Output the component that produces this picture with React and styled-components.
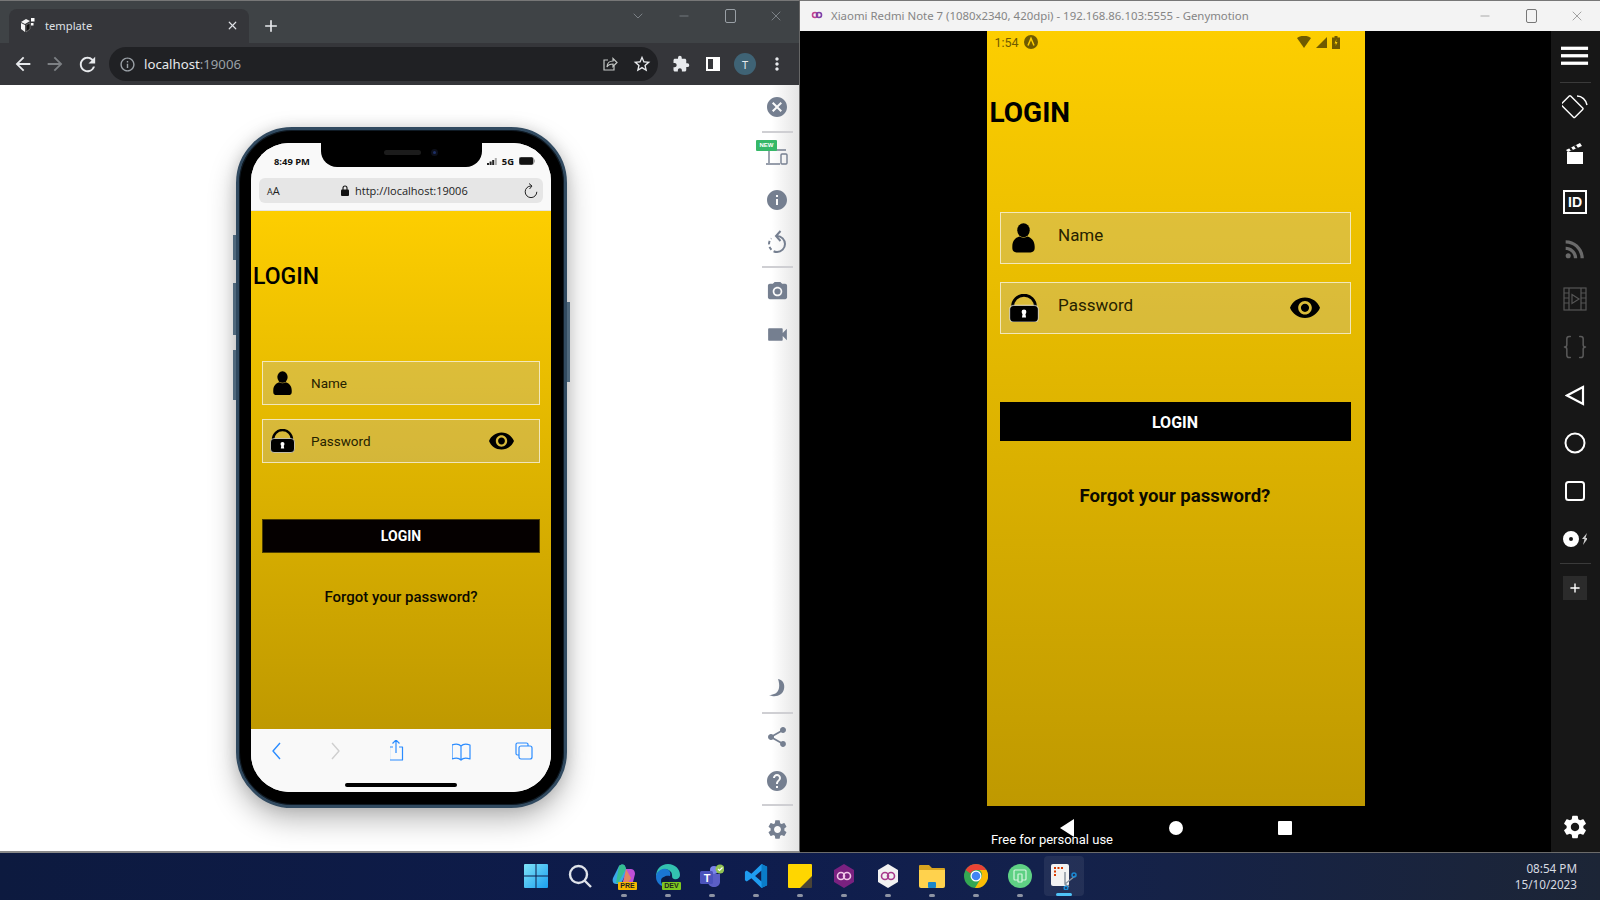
import styled, { createGlobalStyle } from "styled-components";
import {
  MdCancel,
  MdInfo,
  MdCameraAlt,
  MdVideocam,
  MdHelp,
  MdSettings,
  MdShare,
  MdRssFeed,
  MdExtension,
  MdArrowBack,
  MdArrowForward,
  MdRefresh,
  MdInfoOutline,
  MdStarBorder,
  MdMoreVert,
} from "react-icons/md";
import { Braces, Minus, X, ChevronDown, Plus } from "lucide-react";

const GlobalStyle = createGlobalStyle`
  html, body { margin: 0; padding: 0; width: 1600px; height: 900px; overflow: hidden; }
  body { font-family: "Noto Sans", sans-serif; background: #000; }
  * { box-sizing: border-box; }
`;

const Desktop = styled.div`
  width: 1600px;
  height: 900px;
  display: flex;
  flex-direction: column;
`;

const Windows = styled.div`
  display: flex;
  height: 853px;
`;

/* ---------- chrome window ---------- */

const BrowserWindow = styled.div`
  width: 800px;
  display: flex;
  flex-direction: column;
  border-bottom: 2px solid #8a8a8a;
  border-right: 1px solid #666;
  background: #fff;
`;

const TitleBar = styled.div`
  height: 43px;
  background: #3f4346;
  border-top: 1px solid #777;
  display: flex;
  padding-left: 9px;
  padding-top: 8px;
  position: relative;
`;

const Tab = styled.div`
  width: 240px;
  height: 34px;
  background: #35363a;
  border-radius: 8px 8px 0 0;
  display: flex;
  align-items: center;
  padding: 0 10px 1px 11px;
  gap: 9px;
  color: #dfe1e5;
  font-size: 11.2px;
`;

const TabTitle = styled.span`
  flex: 1;
`;

const NewTab = styled.div`
  width: 44px;
  height: 34px;
  display: flex;
  align-items: center;
  justify-content: center;
  color: #e8eaed;
`;

const WindowControls = styled.div`
  position: absolute;
  top: 0;
  right: 0;
  display: flex;
`;

const WindowControl = styled.div`
  width: 46px;
  height: 30px;
  display: flex;
  align-items: center;
  justify-content: center;
  color: ${(p) => p.$color || "#9aa0a6"};
`;

const BrowserToolbar = styled.div`
  height: 42px;
  background: #35363a;
  display: flex;
  align-items: center;
  padding-left: 7px;
`;

const ToolbarBtn = styled.div`
  width: 32px;
  height: 32px;
  display: flex;
  align-items: center;
  justify-content: center;
  color: ${(p) => p.$color || "#e8eaed"};
`;

const Omnibox = styled.div`
  width: 549px;
  height: 34px;
  margin: 0 7px 0 6px;
  border-radius: 17px;
  background: #202124;
  display: flex;
  align-items: center;
  padding-left: 10px;
  font-size: 13.2px;
  color: #9aa0a6;
`;

const Host = styled.span`
  color: #e8eaed;
  margin-left: 8px;
`;

const OmniSpacer = styled.div`
  flex: 1;
`;

const Avatar = styled.div`
  width: 22px;
  height: 22px;
  border-radius: 50%;
  background: #3f6375;
  color: #e8eaed;
  font-size: 11px;
  display: flex;
  align-items: center;
  justify-content: center;
`;

const BrowserBody = styled.div`
  flex: 1;
  display: flex;
  justify-content: space-between;
  min-height: 0;
`;

const PhoneArea = styled.div`
  padding: 42px 0 0 236px;
`;

/* ---------- phone frame ---------- */

const Phone = styled.div`
  width: 331px;
  height: 681px;
  position: relative;
  background: #000;
  border: 3px solid #314a60;
  border-radius: 56px;
  padding: 13px 12px;
  box-shadow: 0 12px 28px rgba(0, 0, 0, 0.28), 0 0 14px rgba(0, 0, 0, 0.12),
    inset 0 0 0 1px #0f1a24;
`;

const SideButton = styled.div`
  position: absolute;
  width: 3px;
  top: ${(p) => p.$top}px;
  height: ${(p) => p.$h}px;
  ${(p) => (p.$right ? "right: -6px;" : "left: -6px;")}
  background: #4f687c;
`;

const Screen = styled.div`
  width: 300px;
  height: 649px;
  position: relative;
  border-radius: 38px;
  overflow: hidden;
  display: flex;
  flex-direction: column;
  background: #f9f9f9;
`;

const Notch = styled.div`
  position: absolute;
  top: 0;
  left: 70px;
  width: 161px;
  height: 24px;
  background: #000;
  border-radius: 0 0 16px 16px;
  display: flex;
  align-items: center;
  justify-content: center;
  gap: 10px;
  padding-bottom: 6px;
`;

const Speaker = styled.div`
  width: 37px;
  height: 5px;
  border-radius: 3px;
  background: #1c1c1c;
`;

const NotchCamera = styled.div`
  width: 7px;
  height: 7px;
  border-radius: 50%;
  background: #1d2f66;
  border: 2px solid #0c0f1a;
  margin-right: -18px;
`;

const SafariHeader = styled.div`
  height: 68px;
  background: #f9f9f9;
  border-bottom: 1px solid #e4e4e4;
  display: flex;
  flex-direction: column;
`;

const IosStatus = styled.div`
  height: 35px;
  display: flex;
  align-items: center;
  justify-content: space-between;
  padding: 1px 16px 0 23px;
  font-family: "Open Sans", sans-serif;
  font-size: 9.4px;
  font-weight: 700;
  color: #111;
`;

const IosRight = styled.div`
  display: flex;
  align-items: center;
  gap: 5px;
`;

const UrlBar = styled.div`
  height: 25px;
  margin: 0 8px;
  border-radius: 6px;
  background: #e6e6e6;
  display: flex;
  align-items: center;
  padding: 0 5px 0 8px;
  font-family: "Open Sans", sans-serif;
  color: #222;
`;

const AaLabel = styled.span`
  font-size: 9px;
  width: 74px;
  & b {
    font-weight: 400;
    font-size: 11px;
  }
`;

const UrlText = styled.span`
  font-size: 11px;
  margin-left: 6px;
  flex: 1;
`;

const SafariBar = styled.div`
  flex: 1;
  display: flex;
  flex-direction: column;
  align-items: center;
  background: #f9f9f9;
`;

const SafariIcons = styled.div`
  width: 100%;
  display: flex;
  justify-content: space-between;
  padding: 11px 17px 0 15px;
`;

const HomeIndicator = styled.div`
  width: 112px;
  height: 4px;
  border-radius: 2px;
  background: #000;
  margin-top: auto;
  margin-bottom: 5px;
`;

/* ---------- login form (both devices) ---------- */

const Page = styled.div`
  background: linear-gradient(180deg, #fdce00 0%, #bf9900 100%);
  display: flex;
  flex-direction: column;
  font-family: Roboto, sans-serif;
  color: #000;
  ${(p) =>
    p.$big
      ? "width: 378px; height: 775px; padding: 0 14px 0 13px;"
      : "height: 518px; padding: 52px 11px 0;"}
`;

const PageTitle = styled.div`
  font-size: ${(p) => (p.$big ? 28 : 23)}px;
  font-weight: ${(p) => (p.$big ? 700 : 500)};
  line-height: ${(p) => (p.$big ? 34 : 28)}px;
  margin: ${(p) => (p.$big ? "43px 0 82px -10px" : "0 0 70px -9px")};
`;

const Field = styled.div`
  height: ${(p) => (p.$big ? 52 : 43.5)}px;
  margin-bottom: ${(p) => (p.$big ? 18 : 14.5)}px;
  display: flex;
  align-items: center;
  border: 1px solid rgba(255, 255, 255, 0.65);
  background: rgba(190, 190, 190, 0.3);
`;

const FieldIcon = styled.div`
  width: ${(p) => (p.$big ? 46 : 38)}px;
  display: flex;
  justify-content: center;
`;

const FieldText = styled.span`
  font-size: ${(p) => (p.$big ? 17 : 13.5)}px;
  color: #262200;
  margin-left: ${(p) => (p.$big ? 11.5 : 10)}px;
  margin-bottom: ${(p) => (p.$big ? 6 : 0)}px;
`;

const EyeSlot = styled.div`
  margin-left: auto;
  margin-right: ${(p) => (p.$big ? 30 : 25)}px;
  display: flex;
`;

const SubmitButton = styled.div`
  height: ${(p) => (p.$big ? 39 : 34)}px;
  margin-top: ${(p) => (p.$big ? 50 : 41.5)}px;
  padding-top: ${(p) => (p.$big ? 1 : 0)}px;
  background: ${(p) => (p.$big ? "#000" : "#050000")};
  border: 1px solid ${(p) => (p.$big ? "#000" : "#4c3d00")};
  color: #fff;
  font-weight: 700;
  font-size: ${(p) => (p.$big ? 16 : 14)}px;
  display: flex;
  align-items: center;
  justify-content: center;
`;

const Forgot = styled.div`
  text-align: center;
  font-weight: ${(p) => (p.$big ? 700 : 500)};
  font-size: ${(p) => (p.$big ? 18.6 : 15)}px;
  line-height: ${(p) => (p.$big ? 22 : 20)}px;
  margin-top: ${(p) => (p.$big ? 44 : 34)}px;
  color: #0c0a00;
`;

/* ---------- side rails ---------- */

const LightRail = styled.div`
  width: 50px;
  display: flex;
  flex-direction: column;
  justify-content: space-between;
  align-items: center;
  padding: 0 0 10px 6px;
  background: linear-gradient(90deg, #fff 0%, #fff 45%, #e4e4e4 100%);
`;

const RailGroup = styled.div`
  display: flex;
  flex-direction: column;
  align-items: center;
`;

const RailTool = styled.div`
  position: relative;
  width: 28px;
  height: ${(p) => p.$h || 24}px;
  margin-top: ${(p) => p.$mt || 0}px;
  display: flex;
  align-items: center;
  justify-content: center;
  color: ${(p) => p.$color || "#757f90"};
`;

const RailDivider = styled.div`
  width: 31px;
  height: ${(p) => p.$h || 2}px;
  margin-top: ${(p) => p.$mt}px;
  background: ${(p) => p.$color || "#cfcfd3"};
`;

const NewBadge = styled.span`
  position: absolute;
  left: -7px;
  top: -5px;
  width: 21px;
  height: 11px;
  background: #36b868;
  color: #fff;
  font: 700 6px/11px "Liberation Sans", sans-serif;
  text-align: center;
  border-radius: 1px;
`;

const DarkRail = styled.div`
  width: 49px;
  display: flex;
  flex-direction: column;
  justify-content: space-between;
  align-items: center;
  background: #171717;
  padding: 0 1px 11px 0;
`;

const PlusBox = styled.div`
  width: 24px;
  height: 24px;
  margin-top: 12px;
  background: #2b2b2b;
  color: #fff;
  display: flex;
  align-items: center;
  justify-content: center;
`;

const IdBox = styled.div`
  width: 24px;
  height: 24px;
  border: 2px solid #fff;
  color: #fff;
  font: 700 14px/20px "Liberation Sans", sans-serif;
  text-align: center;
`;

/* ---------- genymotion window ---------- */

const EmulatorWindow = styled.div`
  flex: 1;
  display: flex;
  flex-direction: column;
  background: #000;
  border-bottom: 1px solid #6b6b6b;
`;

const EmulatorTitle = styled.div`
  height: 31px;
  background: #f3f3f3;
  border-top: 1px solid #777;
  display: flex;
  align-items: center;
  position: relative;
  padding: 0 0 2px 10px;
  gap: 7px;
  font-size: 11.4px;
  color: #858585;
`;

const EmulatorBody = styled.div`
  flex: 1;
  display: flex;
  min-height: 0;
`;

const DeviceColumn = styled.div`
  flex: 1;
  position: relative;
  display: flex;
  flex-direction: column;
  align-items: center;
`;

const AndroidStatus = styled.div`
  height: 22px;
  display: flex;
  align-items: center;
  justify-content: space-between;
  margin: 0 -14px 0 -13px;
  padding: 0 25px 0 8px;
  color: #6f5a00;
  font-size: 12.5px;
`;

const StatusGroup = styled.div`
  display: flex;
  align-items: center;
  gap: 5px;
`;

const AndroidNav = styled.div`
  flex: 1;
  display: flex;
  align-items: center;
  justify-content: center;
  gap: 95px;
  padding-bottom: 2px;
`;

const NavSquare = styled.div`
  width: 14px;
  height: 14px;
  background: #fff;
  border-radius: 1px;
`;

const NavCircle = styled(NavSquare)`
  border-radius: 50%;
`;

const Watermark = styled.div`
  position: absolute;
  left: 191px;
  bottom: 5px;
  font-family: Roboto, sans-serif;
  font-size: 13px;
  color: #fff;
  text-shadow: 0 0 2px #000;
`;

/* ---------- taskbar ---------- */

const Taskbar = styled.div`
  height: 47px;
  display: grid;
  grid-template-columns: 1fr auto 1fr;
  background: linear-gradient(90deg, #0d1a3f 0%, #0e1c4d 45%, #13214c 65%, #1c2536 100%);
`;

const TaskRow = styled.div`
  grid-column: 2;
  display: flex;
`;

const TaskItem = styled.div`
  width: ${(p) => (p.$active ? 40 : 44)}px;
  height: ${(p) => (p.$active ? 40 : 47)}px;
  margin: ${(p) => (p.$active ? "3px 2px" : 0)};
  padding-top: ${(p) => (p.$active ? 8 : 11)}px;
  display: flex;
  flex-direction: column;
  align-items: center;
  border-radius: 4px;
  background: ${(p) => (p.$active ? "rgba(255,255,255,0.07)" : "transparent")};
`;

const TaskIconBox = styled.div`
  position: relative;
  width: 24px;
  height: 24px;
  display: flex;
  align-items: center;
  justify-content: center;
`;

const IconTag = styled.span`
  position: absolute;
  left: 6px;
  top: 18px;
  width: 19px;
  height: 8px;
  border-radius: 1px;
  background: ${(p) => p.$bg};
  color: #222;
  font: 700 7px/8px "Liberation Sans", sans-serif;
  text-align: center;
`;

const TeamsLetter = styled.span`
  position: absolute;
  left: 1px;
  top: 8px;
  width: 12px;
  color: #fff;
  font: 700 11px/12px "Liberation Sans", sans-serif;
  text-align: center;
`;

const TaskDot = styled.div`
  width: ${(p) => (p.$active ? 16 : 6)}px;
  height: 3px;
  margin-top: ${(p) => (p.$active ? 3 : 6)}px;
  border-radius: 2px;
  background: ${(p) => (p.$active ? "#4fc3f7" : "#8d93a3")};
`;

const Clock = styled.div`
  justify-self: end;
  padding: 7px 23px 0 0;
  text-align: right;
  color: #d8dbe2;
  font-size: 11.7px;
  line-height: 16px;
`;

/* ---------- drawings ---------- */

const PersonIcon = ({ w }) => (
  <svg width={w} height={w * 1.28} viewBox="0 0 19 25">
    <ellipse cx="9.5" cy="6.2" rx="5.3" ry="6" fill="#000" />
    <path d="M0 20c0-5 3-7.5 6-8.5 2 1.3 5 1.3 7 0 3 1 6 3.5 6 8.5v1.5c0 2-1.5 3.5-3.5 3.5h-12C1.5 25 0 23.5 0 21.5z" fill="#000" />
  </svg>
);

const LockIcon = ({ w }) => (
  <svg width={w} height={w * 0.96} viewBox="0 0 25 24">
    <path d="M3 12v-1.500a9.500 9.500 0 0 1 19 0V12" fill="none" stroke="#000" strokeWidth="2.400" />
    <rect x="0.5" y="9.5" width="24" height="14" rx="3.5" fill="#000" stroke="#fff" strokeOpacity="0.6" />
    <circle cx="12.5" cy="15" r="2" fill="#fff" />
    <path d="M11.4 16h2.200l.6 3.600h-3.400z" fill="#fff" />
  </svg>
);

const EyeIcon = ({ w }) => (
  <svg width={w} height={w * 0.72} viewBox="1 4.5 22 15">
    <path d="M12 4.5C7 4.5 2.73 7.61 1 12c1.73 4.39 6 7.5 11 7.5s9.27-3.11 11-7.5c-1.73-4.39-6-7.5-11-7.5zM12 17c-2.76 0-5-2.24-5-5s2.24-5 5-5 5 2.24 5 5-2.24 5-5 5zm0-8c-1.66 0-3 1.34-3 3s1.34 3 3 3 3-1.34 3-3-1.34-3-3-3z" fill="#000" />
  </svg>
);

const MaximizeIcon = () => (
  <svg width="11" height="14" viewBox="0 0 11 14" fill="none" stroke="currentColor">
    <rect x="0.5" y="0.5" width="10" height="13" rx="1.500" />
  </svg>
);

const ExpoFavicon = () => (
  <svg width="16" height="17" viewBox="0 0 16 17">
    <path d="M1 5l5-3 4 2-5 3zM1 6l4 2v7l-4-3z" fill="#f4f4f4" />
    <path d="M6 8l4-2v6l-4 3z" fill="#111" stroke="#999" strokeWidth=".6" />
    <rect x="11" y="1" width="3.500" height="3.500" fill="#fff" />
    <rect x="11" y="6" width="2.500" height="2.500" fill="#fff" />
  </svg>
);

const SidePanelIcon = () => (
  <svg width="14" height="14" viewBox="0 0 14 14">
    <path d="M0 0h14v14H0zM2 2v10h5V2z" fill="#fff" fillRule="evenodd" />
  </svg>
);

const ShareOutIcon = () => (
  <svg width="16" height="16" viewBox="0 0 16 16" fill="none" stroke="#c4c7c5" strokeWidth="1.2">
    <path d="M6 4H2v10h10v-4" />
    <path d="M5 11c0-4 3-6 6-6V2.500l4 4-4 4V8c-3 0-5 1-6 3z" />
  </svg>
);

const SignalBars = () => (
  <svg width="10" height="7" viewBox="0 0 10 7">
    <rect x="0" y="5" width="2" height="2" fill="#222" />
    <rect x="2.600" y="3.500" width="2" height="3.500" fill="#222" />
    <rect x="5.200" y="2" width="2" height="5" fill="#222" />
    <rect x="7.800" y="0" width="2" height="7" fill="#aaa" />
  </svg>
);

const IosBattery = () => (
  <svg width="16" height="8" viewBox="0 0 16 8">
    <rect x="0" y="0" width="14.500" height="8" rx="2" fill="#111" stroke="#bbb" strokeWidth=".5" />
    <rect x="15" y="2.500" width="1" height="3" fill="#aaa" />
  </svg>
);

const PadlockSmall = () => (
  <svg width="8" height="11" viewBox="0 0 8 11">
    <path d="M2 5V3a2 2 0 0 1 4 0v2" fill="none" stroke="#111" strokeWidth="1.1" />
    <rect x="0" y="4.500" width="8" height="6.500" rx="1" fill="#111" />
  </svg>
);

const IosReload = () => (
  <svg width="14" height="16" viewBox="0 0 14 16" fill="none" stroke="#222" strokeWidth="1">
    <path d="M7 3a5.800 5.800 0 1 0 5.800 5.800" />
    <path d="M5 0.500L8 3 5.500 6" />
  </svg>
);

const SafariGlyph = ({ children }) => (
  <svg width="20" height="22" viewBox="0 0 20 22" fill="none" stroke="#2b8cff" strokeWidth="1.2" strokeLinejoin="round">
    {children}
  </svg>
);

const DeviceIcon = () => (
  <svg width="24" height="18" viewBox="0 0 24 18" fill="none" stroke="#757f90" strokeWidth="1.4">
    <path d="M4 2v13M1 16h14M4 2h17" />
    <rect x="16" y="6" width="6" height="10" rx="1" />
  </svg>
);

const DashedRotate = () => (
  <svg width="20" height="24" viewBox="0 0 20 24" fill="none" stroke="#757f90" strokeWidth="2">
    <path d="M10 6a8 8 0 0 1 0 16" />
    <path d="M10 22a8 8 0 0 1-5.700-13.600" strokeDasharray="3.500 2.500" />
    <path d="M13.500 1L9 6l4.500 5" />
  </svg>
);

const MoonIcon = () => (
  <svg width="18" height="20" viewBox="0 0 18 20">
    <path d="M10 1c5 1 7 5 6 10-1 5-6 8-12 7-1 0-2-1-3-1 5 0 9-2 10-7 .6-3 0-6-1-9z" fill="#757f90" />
  </svg>
);

const Hamburger = () => (
  <svg width="30" height="20" viewBox="0 0 30 20" fill="#fff">
    <rect y="0" width="29" height="3.500" />
    <rect y="8" width="29" height="3.500" />
    <rect y="16" width="29" height="3.500" />
  </svg>
);

const RotateDevice = () => (
  <svg width="26" height="26" viewBox="0 0 26 26" fill="none" stroke="#fff" strokeWidth="1.4">
    <rect x="5" y="6" width="13" height="19" rx="1" transform="rotate(-45 11.500 15.500) translate(1 -3)" />
    <path d="M15 2c5 0 9 4 10 9" />
  </svg>
);

const Clapper = () => (
  <svg width="18" height="22" viewBox="0 0 18 22" fill="#fff">
    <rect x="1" y="9" width="16" height="12" />
    <path d="M0 7L14 0l2 3L2 9z" />
    <path d="M3 5l2-1 2 3-2 1zM8 3l2-1 2 3-2 1z" fill="#171717" />
  </svg>
);

const OutlineTriangle = () => (
  <svg width="20" height="21" viewBox="0 0 20 21">
    <path d="M18 2L2 10.500 18 19z" fill="none" stroke="#fff" strokeWidth="2.200" />
  </svg>
);

const NavBack = () => (
  <svg width="14" height="18" viewBox="0 0 14 18">
    <path d="M14 0L0 9l14 9z" fill="#fff" />
  </svg>
);

const FilmStrip = () => (
  <svg width="24" height="24" viewBox="0 0 24 24" fill="none" stroke="#555" strokeWidth="1.200">
    <rect x="1" y="1" width="22" height="22" />
    <path d="M6 1v22M18 1v22M1 6h5M1 11h5M1 16h5M18 6h5M18 11h5M18 16h5" />
    <path d="M9 7.500l7 4.500-7 4.500z" />
  </svg>
);

const DiscFlash = () => (
  <svg width="24" height="16" viewBox="0 0 24 16">
    <path d="M8 0a8 8 0 1 0 0 16A8 8 0 0 0 8 0zm0 6a2 2 0 1 1 0 4 2 2 0 0 1 0-4z" fill="#fff" fillRule="evenodd" />
    <path d="M24 2l-5 6h2.500l-1.500 6 5-7h-2.500z" fill="#ccc" />
  </svg>
);

const RingIcon = () => (
  <svg width="22" height="22" viewBox="0 0 22 22">
    <circle cx="11" cy="11" r="9.500" fill="none" stroke="#fff" strokeWidth="2" />
  </svg>
);

const SquareIcon = () => (
  <svg width="22" height="22" viewBox="0 0 22 22">
    <rect x="2" y="2" width="18" height="18" rx="2.500" fill="none" stroke="#fff" strokeWidth="2" />
  </svg>
);

const GenyLogo = () => (
  <svg width="14" height="14" viewBox="0 0 14 14" fill="none" strokeWidth="1.600">
    <circle cx="5" cy="7" r="2.500" stroke="#c2418f" />
    <circle cx="9" cy="7" r="2.500" stroke="#7e3fa8" />
  </svg>
);

const WifiIcon = () => (
  <svg width="14" height="12" viewBox="0 0 14 12">
    <path d="M0 2c4-3 10-3 14 0l-7 10z" fill="#6f5a00" />
  </svg>
);

const CellIcon = () => (
  <svg width="11" height="11" viewBox="0 0 11 11">
    <path d="M11 0v11H0z" fill="#6f5a00" />
  </svg>
);

const BatteryIcon = () => (
  <svg width="8" height="13" viewBox="0 0 8 13">
    <path d="M2.500 0h3v1.500H8V13H0V1.500h2.500z" fill="#6f5a00" />
    <path d="M4.500 3L2.500 7.500H4L3.500 10l2-4H4z" fill="#ffd000" />
  </svg>
);

const AutoBadge = () => (
  <svg width="14" height="14" viewBox="0 0 14 14">
    <circle cx="7" cy="7" r="7" fill="#6f5a00" />
    <path d="M4 10.500L7 3.500l3 7" fill="none" stroke="#ffd000" strokeWidth="1.500" />
  </svg>
);

/* taskbar app icons */

const WinLogo = () => (
  <svg width="24" height="24" viewBox="0 0 24 24">
    <defs>
      <linearGradient id="win" x1="0" y1="0" x2="1" y2="1">
        <stop offset="0" stopColor="#7fe3f7" />
        <stop offset="1" stopColor="#1a9ff0" />
      </linearGradient>
    </defs>
    <path d="M0 1a1 1 0 0 1 1-1h10.500v11.500H0zM12.500 0H23a1 1 0 0 1 1 1v10.500H12.500zM0 12.500h11.500V24H1a1 1 0 0 1-1-1zM12.500 12.500H24V23a1 1 0 0 1-1 1H12.500z" fill="url(#win)" />
  </svg>
);

const SearchGlyph = () => (
  <svg width="24" height="24" viewBox="0 0 24 24" fill="none" stroke="#dfe3ea" strokeWidth="2.400">
    <circle cx="10.500" cy="10.500" r="8.500" />
    <path d="M16.500 16.500L23 23" />
  </svg>
);

const CopilotPre = () => (
  <TaskIconBox>
    <svg width="24" height="24" viewBox="0 0 24 24">
      <path d="M7 2c2-2 5-2 6 0l2 5-6 13H4C1 20 0 17 1 14z" fill="#3aa7e8" />
      <path d="M7 2c2-2 5-2 6 0l1 3-8 14H4z" fill="#34c47a" opacity=".8" />
      <path d="M14 5h5c3 0 4 3 4 5l-2 8c-1 2-3 3-5 3h-6z" fill="#c04fd8" />
      <path d="M14 5l5 9-4 7h-4z" fill="#f0a030" opacity=".7" />
    </svg>
    <IconTag $bg="#f5b800">PRE</IconTag>
  </TaskIconBox>
);

const EdgeDev = () => (
  <TaskIconBox>
    <svg width="24" height="24" viewBox="0 0 24 24">
      <path d="M12 0c7 0 12 5 12 11 0 3-3 5-6 4-3-1-1-4-3-7C13 5 8 4 4 7 2 9 1 11 0 13 0 5 5 0 12 0z" fill="#33c1b0" />
      <path d="M0 13c0-5 5-9 10-8 4 1 5 4 4 7-4-1-8 1-8 5 0 3 2 5 5 6-6 0-11-4-11-10z" fill="#1a76d2" />
      <circle cx="9" cy="17" r="4" fill="#0c1b40" />
    </svg>
    <IconTag $bg="#7ec820">DEV</IconTag>
  </TaskIconBox>
);

const TeamsIcon = () => (
  <TaskIconBox>
    <svg width="24" height="24" viewBox="0 0 24 24">
      <circle cx="14" cy="6" r="4" fill="#7b83eb" />
      <path d="M8 10h12v8c0 3-3 5-6 5s-6-2-6-5z" fill="#5b5fc7" />
      <rect x="0" y="7" width="13" height="13" rx="1.500" fill="#4b53bc" />
      <circle cx="20" cy="5" r="4.500" fill="#92c353" />
      <path d="M18 5l1.500 1.500L22.500 3.500" fill="none" stroke="#fff" strokeWidth="1.200" />
    </svg>
    <TeamsLetter>T</TeamsLetter>
  </TaskIconBox>
);

const VsCodeIcon = () => (
  <svg width="24" height="24" viewBox="0 0 24 26">
    <path d="M18 0l6 3v20l-6 3-11-10.500L2 19l-2-1.500V8.500L2 7l5 3.500zM18 7l-7 6 7 6z" fill="#1f9cf0" fillRule="evenodd" />
    <path d="M18 0l6 3v20l-6 3z" fill="#0a7cc8" />
  </svg>
);

const StickyIcon = () => (
  <svg width="24" height="24" viewBox="0 0 24 24">
    <path d="M1 0h22a1 1 0 0 1 1 1v12L13 24H1a1 1 0 0 1-1-1V1a1 1 0 0 1 1-1z" fill="#ffd600" />
    <path d="M24 12v11a1 1 0 0 1-1 1H12z" fill="#4a4436" />
  </svg>
);

const HexIcon = ({ fill, ring }) => (
  <svg width="22" height="24" viewBox="0 0 22 24">
    <path d="M11 0l10 6v12l-10 6-10-6V6z" fill={fill} />
    <circle cx="8" cy="12" r="3.500" fill="none" stroke={ring} strokeWidth="1.600" />
    <circle cx="14" cy="12" r="3.500" fill="none" stroke={ring} strokeWidth="1.600" />
  </svg>
);

const FolderIcon = () => (
  <svg width="26" height="24" viewBox="0 0 26 24">
    <path d="M1 1h9l3 3h12a1 1 0 0 1 1 1v3H0V2a1 1 0 0 1 1-1z" fill="#d9a520" />
    <path d="M0 6h26v16a2 2 0 0 1-2 2H2a2 2 0 0 1-2-2z" fill="#ffd24d" />
    <rect x="9" y="18" width="8" height="6" rx="1" fill="#1b86c9" />
  </svg>
);

const ChromeIcon = () => (
  <svg width="24" height="24" viewBox="0 0 24 24">
    <circle cx="12" cy="12" r="12" fill="#34a853" />
    <path d="M12 0a12 12 0 0 1 10.400 6H12a6 6 0 0 0-5.500 3.500L1.600 6A12 12 0 0 1 12 0z" fill="#ea4335" />
    <path d="M22.400 6A12 12 0 0 1 11 24l5.500-9a6 6 0 0 0-1-9z" fill="#fbbc05" />
    <circle cx="12" cy="12" r="5.500" fill="#fff" />
    <circle cx="12" cy="12" r="4.300" fill="#4285f4" />
  </svg>
);

const RemoteIcon = () => (
  <svg width="24" height="24" viewBox="0 0 24 24">
    <circle cx="12" cy="12" r="12" fill="#5fd184" />
    <rect x="6" y="6" width="12" height="10" rx="1" fill="none" stroke="#d6f5df" strokeWidth="1.200" />
    <rect x="10" y="10" width="4" height="8" rx=".5" fill="#5fd184" stroke="#d6f5df" strokeWidth="1.200" />
  </svg>
);

const SnipIcon = () => (
  <svg width="26" height="26" viewBox="0 0 26 26">
    <rect x="0" y="0" width="18" height="22" rx="2" fill="#f2f2f2" />
    <path d="M3 3h2v2H3zM6.500 3h2v2h-2zM10 3h2v2h-2zM3 6.500h2v2H3zM3 10h2v2H3z" fill="#d83b01" />
    <path d="M14 8v12l4 3M24 12L14 20" fill="none" stroke="#8a94a0" strokeWidth="1.500" />
    <circle cx="23" cy="11" r="2" fill="none" stroke="#1a8ad4" strokeWidth="1.500" />
    <circle cx="15" cy="24" r="1.800" fill="none" stroke="#1a8ad4" strokeWidth="1.500" />
  </svg>
);

const taskApps = [
  { icon: <WinLogo />, dot: false },
  { icon: <SearchGlyph />, dot: false },
  { icon: <CopilotPre />, dot: true },
  { icon: <EdgeDev />, dot: true },
  { icon: <TeamsIcon />, dot: true },
  { icon: <VsCodeIcon />, dot: true },
  { icon: <StickyIcon />, dot: true },
  { icon: <HexIcon fill="#7a2180" ring="#f0c8e8" />, dot: true },
  { icon: <HexIcon fill="#f2f2f2" ring="#a83a8c" />, dot: true },
  { icon: <FolderIcon />, dot: true },
  { icon: <ChromeIcon />, dot: true },
  { icon: <RemoteIcon />, dot: true },
  { icon: <SnipIcon />, dot: true, active: true },
];

const LoginForm = ({ big }) => (
  <>
    <PageTitle $big={big}>LOGIN</PageTitle>
    <Field $big={big}>
      <FieldIcon $big={big}>
        <PersonIcon w={big ? 23 : 19} />
      </FieldIcon>
      <FieldText $big={big}>Name</FieldText>
    </Field>
    <Field $big={big}>
      <FieldIcon $big={big}>
        <LockIcon w={big ? 30 : 25} />
      </FieldIcon>
      <FieldText $big={big}>Password</FieldText>
      <EyeSlot $big={big}>
        <EyeIcon w={big ? 30 : 25} />
      </EyeSlot>
    </Field>
    <SubmitButton $big={big}>LOGIN</SubmitButton>
    <Forgot $big={big}>Forgot your password?</Forgot>
  </>
);

export default function App() {
  return (
    <Desktop>
      <GlobalStyle />
      <Windows>
        <BrowserWindow>
          <TitleBar>
            <Tab>
              <ExpoFavicon />
              <TabTitle>template</TabTitle>
              <X size={13} strokeWidth={2.2} />
            </Tab>
            <NewTab>
              <Plus size={18} strokeWidth={2.2} />
            </NewTab>
            <WindowControls>
              <WindowControl>
                <ChevronDown size={16} strokeWidth={1} />
              </WindowControl>
              <WindowControl>
                <Minus size={14} strokeWidth={1} />
              </WindowControl>
              <WindowControl>
                <MaximizeIcon />
              </WindowControl>
              <WindowControl>
                <X size={16} strokeWidth={1} />
              </WindowControl>
            </WindowControls>
          </TitleBar>
          <BrowserToolbar>
            <ToolbarBtn>
              <MdArrowBack size={22} />
            </ToolbarBtn>
            <ToolbarBtn $color="#7d8084">
              <MdArrowForward size={22} />
            </ToolbarBtn>
            <ToolbarBtn>
              <MdRefresh size={23} />
            </ToolbarBtn>
            <Omnibox>
              <MdInfoOutline size={17} />
              <Host>localhost</Host>:19006
              <OmniSpacer />
              <ToolbarBtn>
                <ShareOutIcon />
              </ToolbarBtn>
              <ToolbarBtn>
                <MdStarBorder size={20} />
              </ToolbarBtn>
            </Omnibox>
            <ToolbarBtn>
              <MdExtension size={18} />
            </ToolbarBtn>
            <ToolbarBtn>
              <SidePanelIcon />
            </ToolbarBtn>
            <ToolbarBtn>
              <Avatar>T</Avatar>
            </ToolbarBtn>
            <ToolbarBtn>
              <MdMoreVert size={20} />
            </ToolbarBtn>
          </BrowserToolbar>
          <BrowserBody>
            <PhoneArea>
              <Phone>
                <SideButton $top={105} $h={25} />
                <SideButton $top={153} $h={52} />
                <SideButton $top={220} $h={50} />
                <SideButton $right $top={172} $h={80} />
                <Screen>
                  <SafariHeader>
                    <IosStatus>
                      <span>8:49 PM</span>
                      <IosRight>
                        <SignalBars />
                        <span>5G</span>
                        <IosBattery />
                      </IosRight>
                    </IosStatus>
                    <UrlBar>
                      <AaLabel>
                        A<b>A</b>
                      </AaLabel>
                      <PadlockSmall />
                      <UrlText>http://localhost:19006</UrlText>
                      <IosReload />
                    </UrlBar>
                  </SafariHeader>
                  <Page>
                    <LoginForm />
                  </Page>
                  <SafariBar>
                    <SafariIcons>
                      <SafariGlyph>
                        <path d="M14 3L7 11l7 8" strokeWidth="1.400" />
                      </SafariGlyph>
                      <SafariGlyph>
                        <path d="M4 3l7 8-7 8" stroke="#cfcfcf" strokeWidth="1.400" />
                      </SafariGlyph>
                      <SafariGlyph>
                        <path d="M3 7H-.500v13h13V7H9M6 13V0M2.500 3.500L6 0l3.500 3.500" />
                      </SafariGlyph>
                      <SafariGlyph>
                        <path d="M9 6C7 4 3 4 0 5v14c3-1 7-1 9 1 2-2 6-2 9-1V5c-3-1-7-1-9 1zM9 6v14" />
                      </SafariGlyph>
                      <SafariGlyph>
                        <rect x="5" y="6" width="13" height="13" rx="2" />
                        <path d="M5 15H3.500A1.500 1.500 0 0 1 2 13.500v-9A1.500 1.500 0 0 1 3.500 3h9A1.500 1.500 0 0 1 14 4.500V6" />
                      </SafariGlyph>
                    </SafariIcons>
                    <HomeIndicator />
                  </SafariBar>
                  <Notch>
                    <Speaker />
                    <NotchCamera />
                  </Notch>
                </Screen>
              </Phone>
            </PhoneArea>
            <LightRail>
              <RailGroup>
                <RailTool $mt={10}>
                  <MdCancel size={24} />
                </RailTool>
                <RailDivider $mt={12} />
                <RailTool $mt={12}>
                  <NewBadge>NEW</NewBadge>
                  <DeviceIcon />
                </RailTool>
                <RailTool $mt={19}>
                  <MdInfo size={24} />
                </RailTool>
                <RailTool $mt={18}>
                  <DashedRotate />
                </RailTool>
                <RailDivider $mt={12} />
                <RailTool $mt={11}>
                  <MdCameraAlt size={23} />
                </RailTool>
                <RailTool $mt={19}>
                  <MdVideocam size={25} />
                </RailTool>
              </RailGroup>
              <RailGroup>
                <RailTool>
                  <MoonIcon />
                </RailTool>
                <RailDivider $mt={12} />
                <RailTool $mt={11}>
                  <MdShare size={24} />
                </RailTool>
                <RailTool $mt={20}>
                  <MdHelp size={24} />
                </RailTool>
                <RailDivider $mt={11} />
                <RailTool $mt={11}>
                  <MdSettings size={23} />
                </RailTool>
              </RailGroup>
            </LightRail>
          </BrowserBody>
        </BrowserWindow>

        <EmulatorWindow>
          <EmulatorTitle>
            <GenyLogo />
            Xiaomi Redmi Note 7 (1080x2340, 420dpi) - 192.168.86.103:5555 - Genymotion
            <WindowControls>
              <WindowControl $color="#777">
                <Minus size={14} strokeWidth={1} />
              </WindowControl>
              <WindowControl $color="#777">
                <MaximizeIcon />
              </WindowControl>
              <WindowControl $color="#777">
                <X size={16} strokeWidth={1} />
              </WindowControl>
            </WindowControls>
          </EmulatorTitle>
          <EmulatorBody>
            <DeviceColumn>
              <Page $big>
                <AndroidStatus>
                  <StatusGroup>
                    <span>1:54</span>
                    <AutoBadge />
                  </StatusGroup>
                  <StatusGroup>
                    <WifiIcon />
                    <CellIcon />
                    <BatteryIcon />
                  </StatusGroup>
                </AndroidStatus>
                <LoginForm big />
              </Page>
              <AndroidNav>
                <NavBack />
                <NavCircle />
                <NavSquare />
              </AndroidNav>
              <Watermark>Free for personal use</Watermark>
            </DeviceColumn>
            <DarkRail>
              <RailGroup>
                <RailTool $h={28} $mt={11}>
                  <Hamburger />
                </RailTool>
                <RailDivider $mt={12} $h={1} $color="#3a3a3a" />
                <RailTool $h={28} $mt={10}>
                  <RotateDevice />
                </RailTool>
                <RailTool $h={28} $mt={19}>
                  <Clapper />
                </RailTool>
                <RailTool $h={28} $mt={20}>
                  <IdBox>ID</IdBox>
                </RailTool>
                <RailTool $h={28} $mt={19} $color="#6a6a6a">
                  <MdRssFeed size={32} />
                </RailTool>
                <RailTool $h={28} $mt={22}>
                  <FilmStrip />
                </RailTool>
                <RailTool $h={28} $mt={20} $color="#5a5a5a">
                  <Braces size={28} strokeWidth={1.3} />
                </RailTool>
                <RailTool $h={28} $mt={20}>
                  <OutlineTriangle />
                </RailTool>
                <RailTool $h={28} $mt={20}>
                  <RingIcon />
                </RailTool>
                <RailTool $h={28} $mt={20}>
                  <SquareIcon />
                </RailTool>
                <RailTool $h={28} $mt={20}>
                  <DiscFlash />
                </RailTool>
                <RailDivider $mt={10} $h={1} $color="#3a3a3a" />
                <PlusBox>
                  <Plus size={14} strokeWidth={2.4} />
                </PlusBox>
              </RailGroup>
              <RailTool $h={28} $color="#fff">
                <MdSettings size={30} />
              </RailTool>
            </DarkRail>
          </EmulatorBody>
        </EmulatorWindow>
      </Windows>

      <Taskbar>
        <TaskRow>
          {taskApps.map((app, i) => (
            <TaskItem key={i} $active={app.active}>
              {app.icon}
              {app.dot && <TaskDot $active={app.active} />}
            </TaskItem>
          ))}
        </TaskRow>
        <Clock>
          08:54 PM
          <br />
          15/10/2023
        </Clock>
      </Taskbar>
    </Desktop>
  );
}
